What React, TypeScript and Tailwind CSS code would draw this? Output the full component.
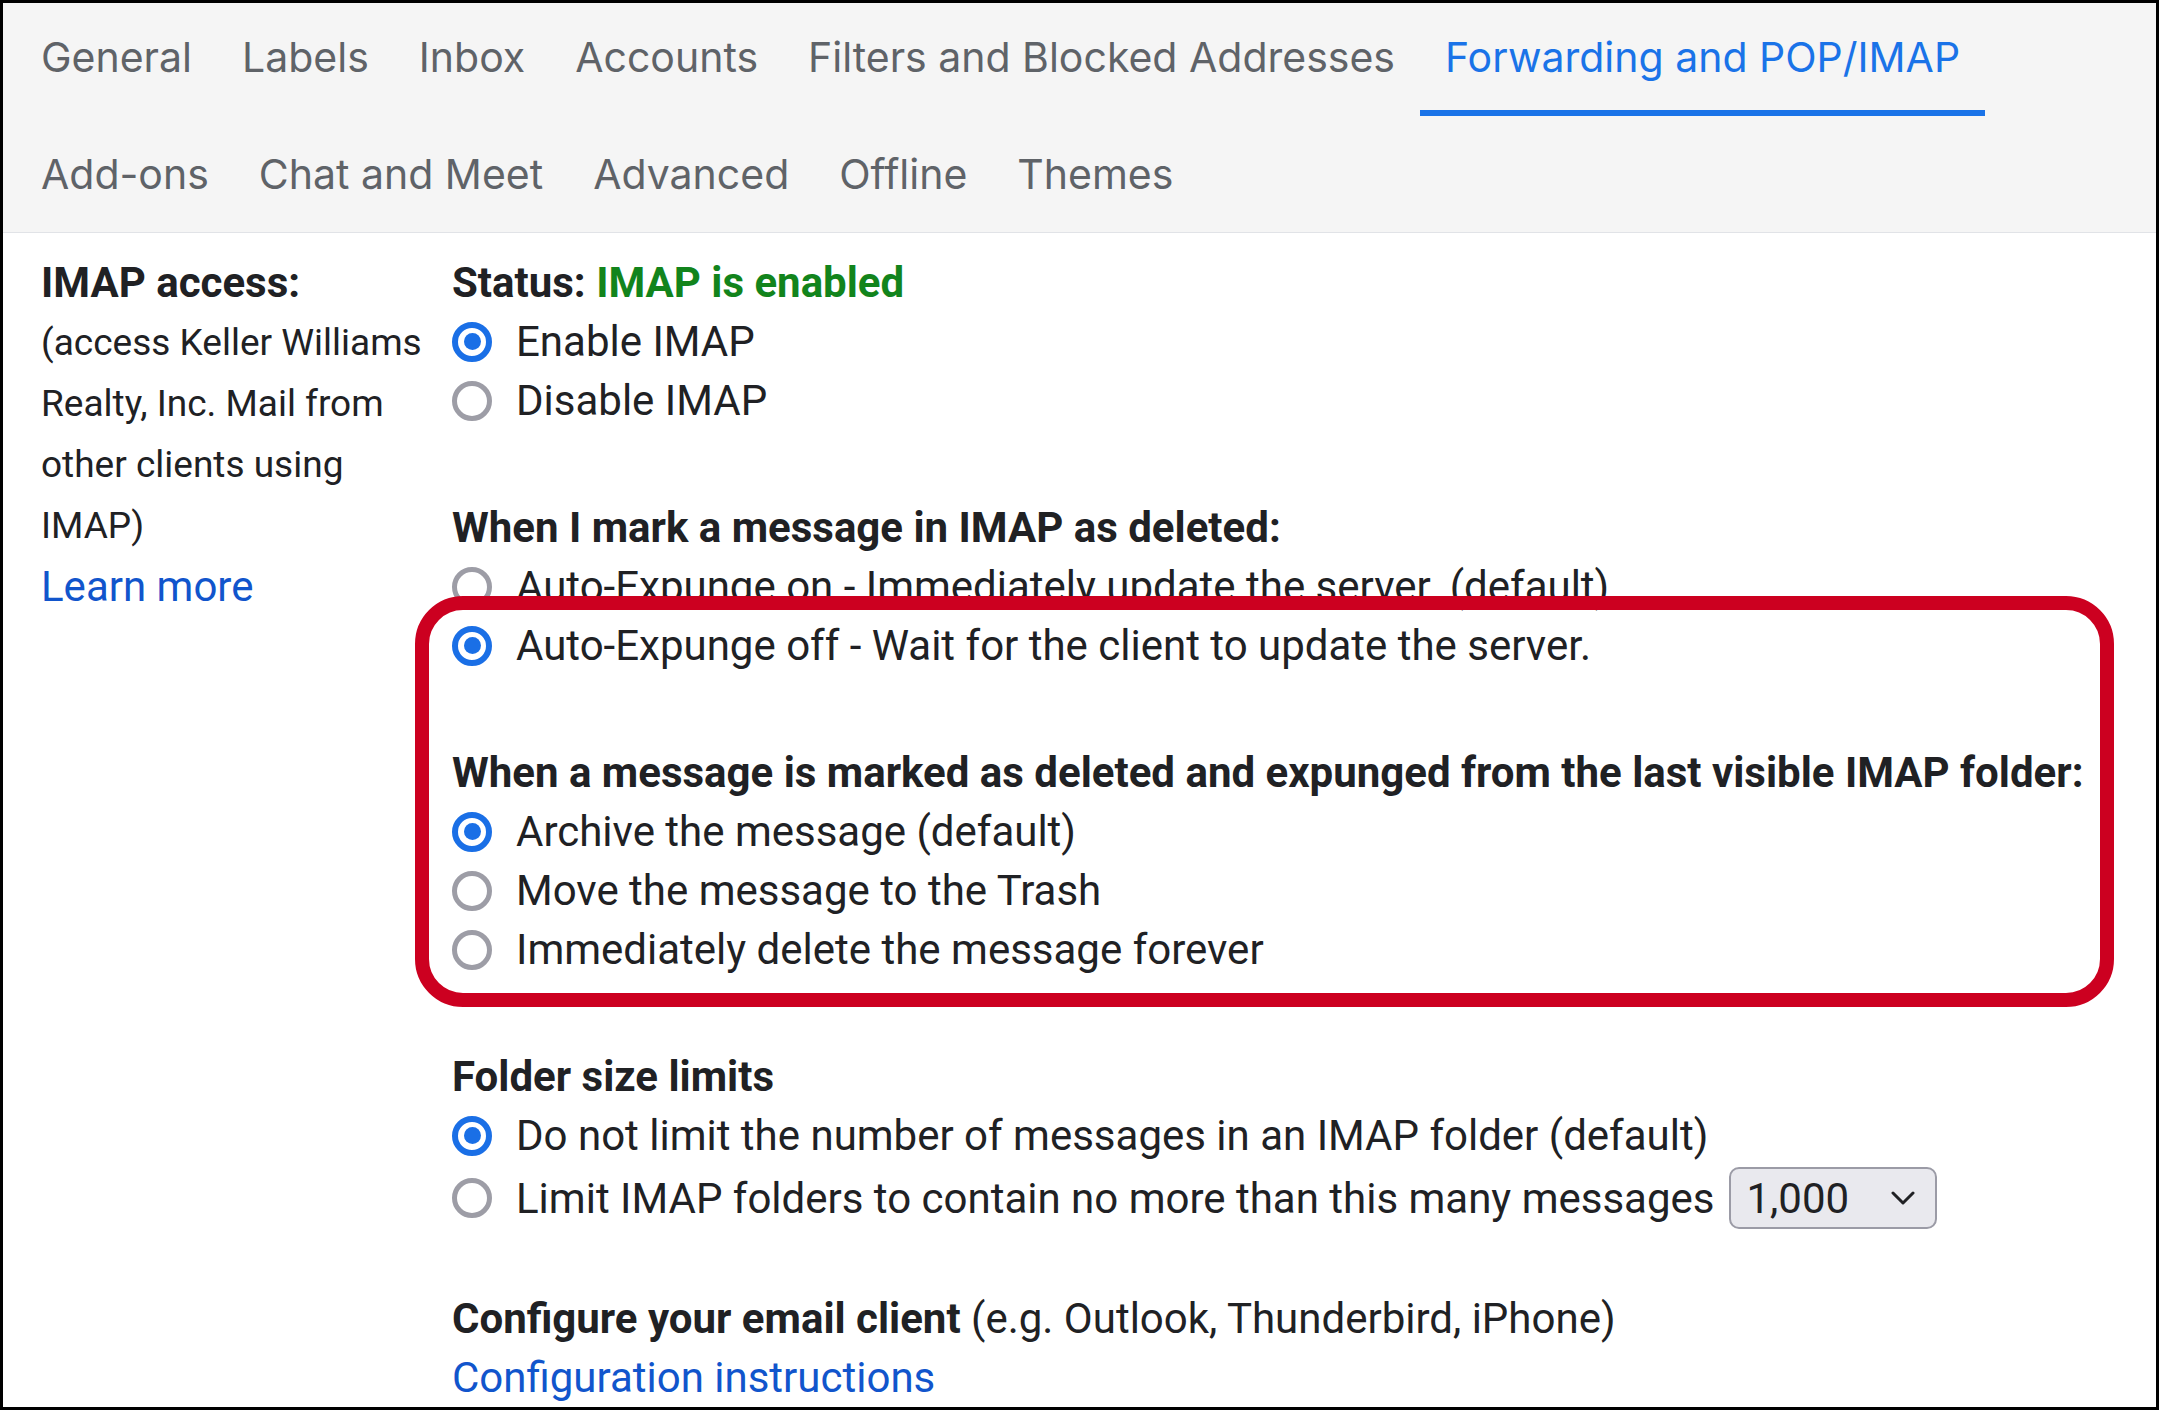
import React from "react";

const tabsTop = ["General", "Labels", "Inbox", "Accounts", "Filters and Blocked Addresses", "Forwarding and POP/IMAP"];
const tabsBottom = ["Add-ons", "Chat and Meet", "Advanced", "Offline", "Themes"];

const Radio: React.FC<{ checked?: boolean }> = ({ checked }) =>
  checked ? (
    <span className="flex h-[40px] w-[40px] shrink-0 items-center justify-center rounded-full border-[6px] border-[#1a6fe6]">
      <span className="h-[17px] w-[17px] rounded-full bg-[#1a6fe6]" />
    </span>
  ) : (
    <span className="h-[40px] w-[40px] shrink-0 rounded-full border-[5px] border-[#9d9da6]" />
  );

const Option: React.FC<{ checked?: boolean; label: string }> = ({ checked, label }) => (
  <div className="flex h-[59px] items-center">
    <Radio checked={checked} />
    <span className="ml-[24px] whitespace-nowrap">{label}</span>
  </div>
);

const Heading: React.FC<{ children: React.ReactNode; className?: string }> = ({ children, className = "" }) => (
  <div className={`flex h-[59px] items-center whitespace-nowrap font-bold ${className}`}>{children}</div>
);

export default function App() {
  return (
    <div className="relative h-[1410px] w-[2159px] overflow-hidden border-[3px] border-black bg-white font-['Roboto',sans-serif] text-[42px] text-[#202124]">
      {/* tab header */}
      <div className="border-b border-[#e1e3e7] bg-[#f5f5f5] pl-[13px] font-['Inter',sans-serif] text-[41px] text-[#5f6368]">
        <div className="flex h-[113px]">
          {tabsTop.map((t) => {
            const active = t === "Forwarding and POP/IMAP";
            return (
              <div
                key={t}
                className={`flex items-center whitespace-nowrap border-b-[6px] px-[25px] pt-[3px] ${
                  active ? "border-[#1a73e8] text-[#1a73e8]" : "border-transparent"
                }`}
              >
                {t}
              </div>
            );
          })}
        </div>
        <div className="flex h-[116px] pt-[2px]">
          {tabsBottom.map((t) => (
            <div key={t} className="flex items-center whitespace-nowrap px-[25px]">
              {t}
            </div>
          ))}
        </div>
      </div>

      {/* settings body */}
      <div className="flex pl-[38px] pt-[20px]">
        <div className="w-[411px] shrink-0">
          <Heading>IMAP access:</Heading>
          <div className="w-[396px] text-[37px] leading-[61px]">
            (access Keller Williams Realty, Inc. Mail from other clients using IMAP)
            <div className="text-[42px] text-[#1155cc]">Learn more</div>
          </div>
        </div>

        <div className="flex-1">
          <Heading>
            Status:&nbsp;<span className="text-[#12841c]">IMAP is enabled</span>
          </Heading>
          <Option checked label="Enable IMAP" />
          <Option label="Disable IMAP" />

          <Heading className="mt-[68px]">When I mark a message in IMAP as deleted:</Heading>
          <Option label="Auto-Expunge on - Immediately update the server. (default)" />
          <Option checked label="Auto-Expunge off - Wait for the client to update the server." />

          <Heading className="mt-[68px]">
            When a message is marked as deleted and expunged from the last visible IMAP folder:
          </Heading>
          <Option checked label="Archive the message (default)" />
          <Option label="Move the message to the Trash" />
          <Option label="Immediately delete the message forever" />

          <Heading className="mt-[68px]">Folder size limits</Heading>
          <Option checked label="Do not limit the number of messages in an IMAP folder (default)" />
          <div className="flex h-[64px] items-center pt-[2px]">
            <Radio />
            <span className="ml-[24px] whitespace-nowrap">Limit IMAP folders to contain no more than this many messages</span>
            <div className="ml-[14px] flex h-[62px] w-[208px] items-center justify-between rounded-[10px] border-2 border-[#9b9ba6] bg-[#e9e9ee] pl-[16px] pr-[20px]">
              <span>1,000</span>
              <svg width="24" height="14" viewBox="0 0 24 14" fill="none">
                <path d="M2 2l10 10L22 2" stroke="#202124" strokeWidth="3" strokeLinecap="round" strokeLinejoin="round" />
              </svg>
            </div>
          </div>

          <div className="mt-[60px] flex h-[59px] items-center whitespace-nowrap">
            <span className="font-bold">Configure your email client</span>&nbsp;(e.g. Outlook, Thunderbird, iPhone)
          </div>
          <div className="flex h-[59px] items-center text-[#1155cc]">Configuration instructions</div>
        </div>
      </div>

      {/* highlight annotation */}
      <div className="pointer-events-none absolute left-[412px] top-[593px] h-[411px] w-[1699px] rounded-[48px] border-[14px] border-[#cc0020]" />
    </div>
  );
}
